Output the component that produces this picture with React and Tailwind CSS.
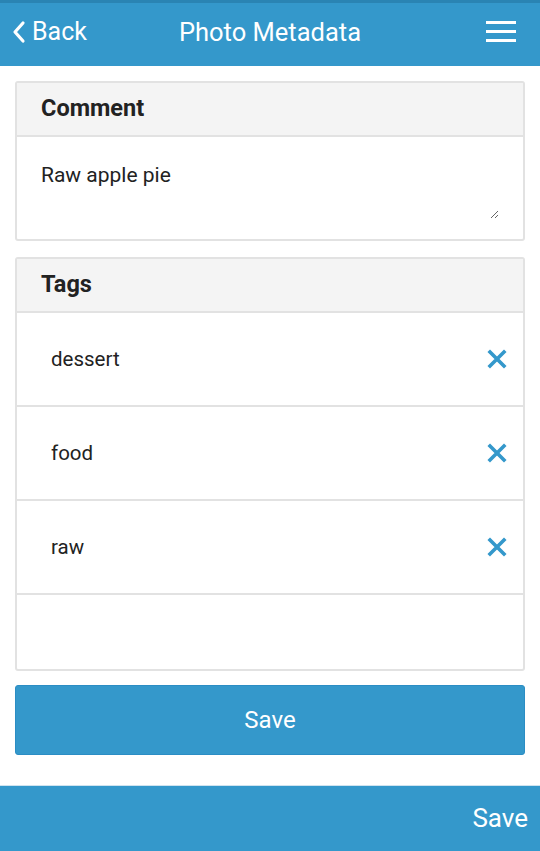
import React, { useState } from "react";

const initialTags = ["dessert", "food", "raw"];

export default function App() {
    const [tags, setTags] = useState(initialTags);
    const [comment, setComment] = useState("Raw apple pie");

    return (
        <div className="w-[540px] h-[851px] bg-white flex flex-col font-['Roboto',sans-serif] text-[#222]">
            {/* Top bar */}
            <header className="h-[66px] bg-[#3498cb] border-t-[3px] border-[#2a84b3] flex items-center justify-between px-3 pb-[6px] text-white relative">
                <button className="flex items-center gap-[6px] text-[25px]">
                    <svg width="14" height="24" viewBox="0 0 14 24" fill="none">
                        <path d="M11 3 L3 12 L11 21" stroke="white" strokeWidth="3.2" strokeLinecap="round" strokeLinejoin="round" />
                    </svg>
                    <span>Back</span>
                </button>
                <h1 className="absolute left-0 right-0 top-[14px] text-center text-[25.5px] leading-[30px] pointer-events-none">Photo Metadata</h1>
                <button className="flex flex-col gap-[6px] mr-[12px]">
                    <span className="block w-[30px] h-[3px] bg-white" />
                    <span className="block w-[30px] h-[3px] bg-white" />
                    <span className="block w-[30px] h-[3px] bg-white" />
                </button>
            </header>

            <main className="flex-1 px-[15px] pt-[15px] flex flex-col">
                {/* Comment panel */}
                <section className="border-2 border-[#e2e2e2] rounded-[3px]">
                    <div className="h-[54px] bg-[#f4f4f4] border-b-2 border-[#e2e2e2] flex items-center px-[24px] text-[23.5px] font-bold">
                        Comment
                    </div>
                    <div className="h-[102px] px-[24px] pt-[24px] pb-[20px]">
                        <textarea
                            className="w-full h-full text-[21px] outline-none resize-y leading-[28px]"
                            value={comment}
                            onChange={(e) => setComment(e.target.value)}
                        />
                    </div>
                </section>

                {/* Tags panel */}
                <section className="mt-[16px] border-2 border-[#e2e2e2] rounded-[3px]">
                    <div className="h-[54px] bg-[#f4f4f4] border-b-2 border-[#e2e2e2] flex items-center px-[24px] text-[23.5px] font-bold">
                        Tags
                    </div>
                    <div className="divide-y-2 divide-[#e2e2e2]">
                        {tags.map((tag) => (
                            <div key={tag} className="h-[94px] flex items-center justify-between pl-[34px] pr-[16px] text-[20.5px]">
                                <span>{tag}</span>
                                <button onClick={() => setTags(tags.filter((t) => t !== tag))}>
                                    <svg width="20" height="20" viewBox="0 0 20 20">
                                        <path d="M3 3 L17 17 M17 3 L3 17" stroke="#3498cb" strokeWidth="3.6" strokeLinecap="square" />
                                    </svg>
                                </button>
                            </div>
                        ))}
                        <div className="h-[74px]" />
                    </div>
                </section>

                <button className="mt-[14px] h-[70px] bg-[#3498cb] border border-[#2b8dc4] rounded-[3px] text-white text-[24px]">
                    Save
                </button>
            </main>

            {/* Bottom bar */}
            <footer className="h-[66px] bg-[#3498cb] border-t border-[#cfe3ef] flex items-center justify-end pr-[12px] text-white text-[26px]">
                Save
            </footer>
        </div>
    );
}
